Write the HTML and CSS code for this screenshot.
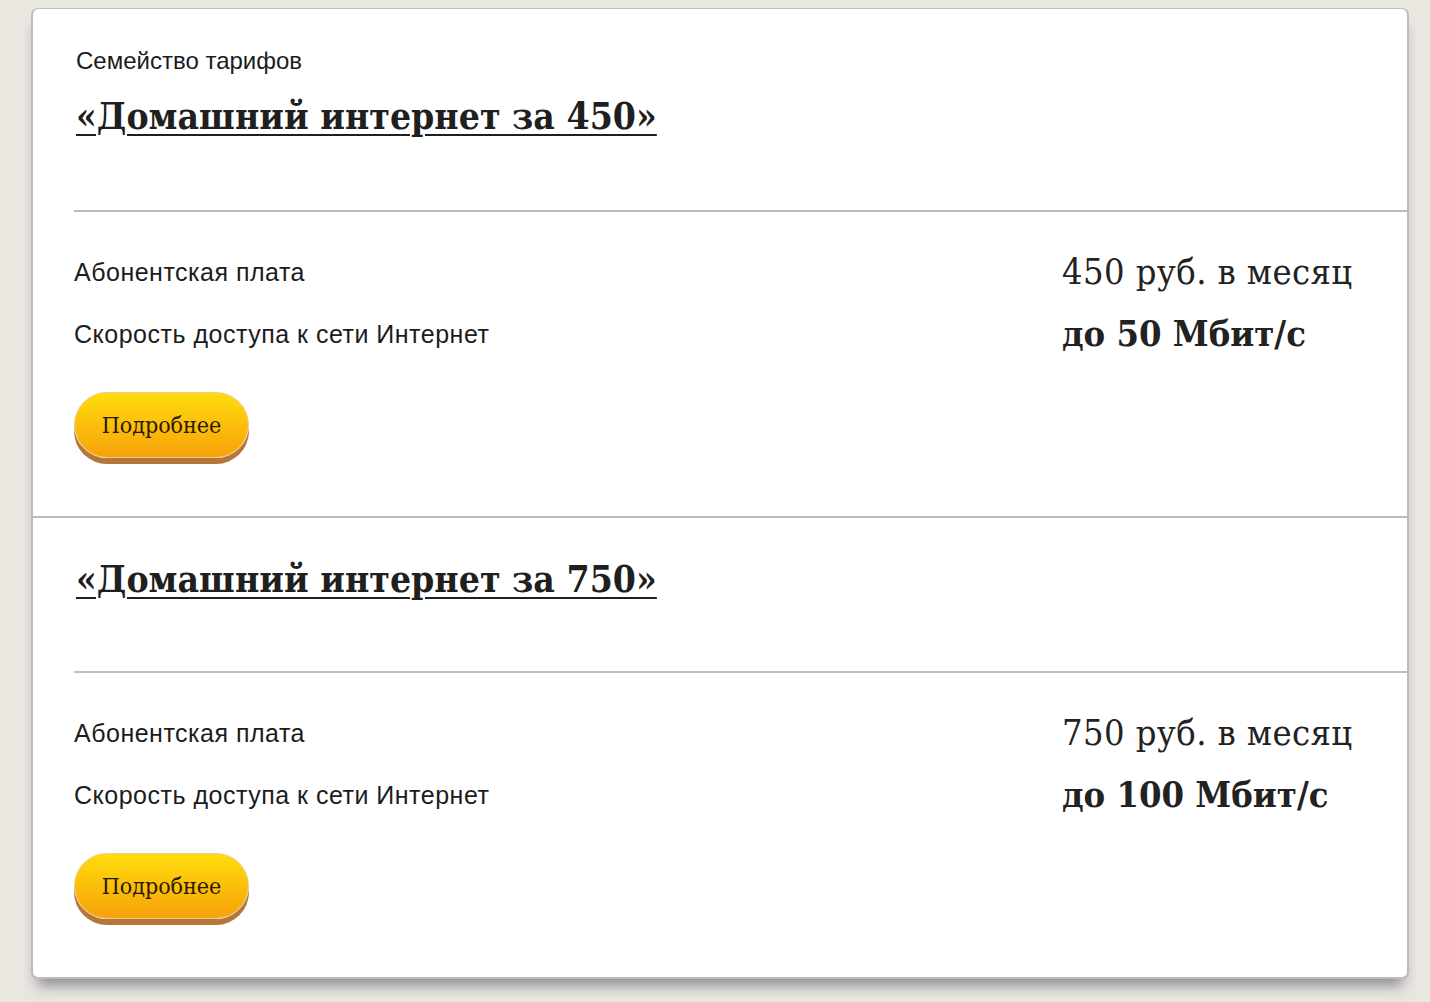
FILE: index.html
```html
<!DOCTYPE html>
<html lang="ru">
<head>
<meta charset="utf-8">
<title>Домашний интернет</title>
<link rel="stylesheet" href="styles.css">
</head>
<body>
<div class="card">
  <section class="tariff">
    <div class="tariff-head first">
      <div class="family">Семейство тарифов</div>
      <a class="title" href="#">«Домашний интернет за 450»</a>
    </div>
    <div class="tariff-body">
      <div class="row">
        <div class="label">Абонентская плата</div>
        <div class="value">450 руб. в месяц</div>
      </div>
      <div class="row">
        <div class="label">Скорость доступа к сети Интернет</div>
        <div class="value bold">до 50 Мбит/с</div>
      </div>
      <a class="btn" href="#">Подробнее</a>
    </div>
  </section>
  <section class="tariff second">
    <div class="tariff-head">
      <a class="title" href="#">«Домашний интернет за 750»</a>
    </div>
    <div class="tariff-body">
      <div class="row">
        <div class="label">Абонентская плата</div>
        <div class="value">750 руб. в месяц</div>
      </div>
      <div class="row">
        <div class="label">Скорость доступа к сети Интернет</div>
        <div class="value bold">до 100 Мбит/с</div>
      </div>
      <a class="btn" href="#">Подробнее</a>
    </div>
  </section>
</div>
</body>
</html>
```

FILE: styles.css
```css
html, body {
  margin: 0;
  padding: 0;
}
body {
  background: #eae6e0;
  font-family: "Liberation Sans", Arial, sans-serif;
  color: #1c1c1c;
  height: 1002px;
  overflow: hidden;
}
.card {
  margin: 8px 21px 0 31px;
  background: #fff;
  border: 2px solid #bcbcbc;
  border-top-width: 1px;
  border-radius: 7px;
  box-shadow: 0 12px 14px -6px rgba(70, 70, 95, 0.6);
  height: 971px;
  box-sizing: border-box;
  overflow: hidden;
}
.tariff.second {
  border-top: 2px solid #bdbdbd;
}
.tariff-head {
  margin-left: 41px;
  padding-left: 2px;
  border-bottom: 2px solid #bdbdbd;
  display: flex;
  flex-direction: column;
  align-items: flex-start;
  box-sizing: border-box;
}
.tariff-head.first {
  height: 203px;
  padding-top: 37px;
}
.second .tariff-head {
  height: 155px;
  padding-top: 37px;
}
.family {
  font-size: 24px;
  line-height: 30px;
}
.title {
  font-family: "DejaVu Serif", serif;
  font-stretch: condensed;
  font-weight: bold;
  font-size: 37px;
  line-height: 48px;
  color: #1f1f1f;
  text-decoration: underline;
  text-decoration-thickness: 2px;
  text-underline-offset: 5px;
}
.first .title {
  margin-top: 16px;
}
.tariff-body {
  padding: 29px 0 0 41px;
  height: 304px;
  box-sizing: border-box;
}
.second .tariff-body {
  padding-top: 29px;
}
.row {
  display: grid;
  grid-template-columns: 1fr 345px;
  align-items: center;
  height: 62px;
}
.label {
  font-size: 25px;
  letter-spacing: 0.5px;
}
.value {
  font-family: "DejaVu Serif", serif;
  font-stretch: condensed;
  font-size: 36px;
  font-weight: 300;
  letter-spacing: 0.4px;
  color: #222;
  margin-top: -2px;
}
.value.bold {
  font-weight: bold;
  letter-spacing: 0;
}
.btn {
  display: inline-flex;
  align-items: center;
  justify-content: center;
  margin-top: 27px;
  width: 175px;
  height: 66px;
  border-radius: 33px;
  box-sizing: border-box;
  background: linear-gradient(#ffdc0c, #f7a20a);
  border: 1px solid #f0c890;
  box-shadow: 0 6px 0 #b5763a;
  font-family: "DejaVu Serif", serif;
  font-stretch: condensed;
  font-size: 23px;
  color: #2a1a00;
  text-decoration: none;
}
```
